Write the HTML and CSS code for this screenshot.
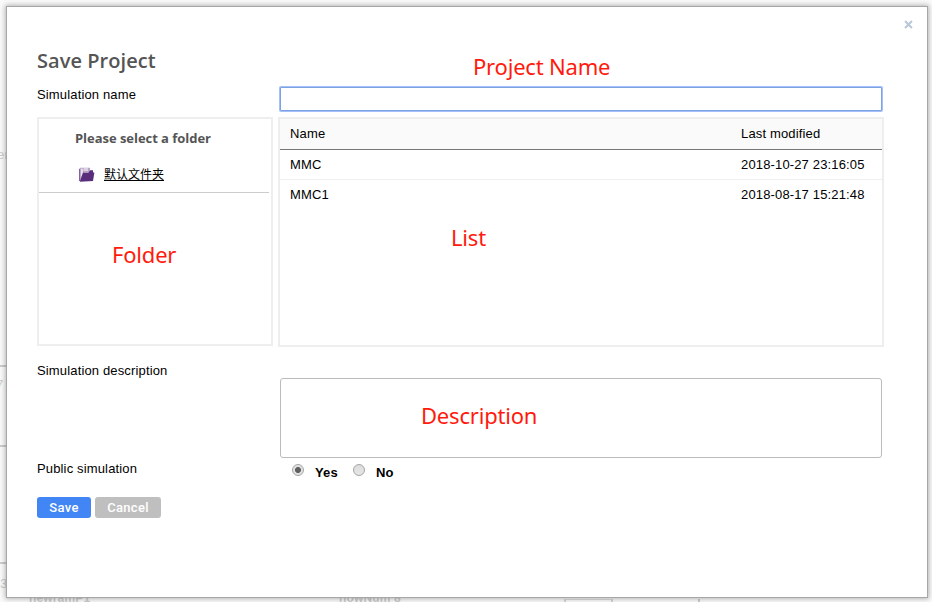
FILE: index.html
```html
<!DOCTYPE html>
<html lang="en">
<head>
<meta charset="utf-8">
<title>Save Project</title>
<link rel="stylesheet" href="styles.css">
</head>
<body>
<div class="backdrop" aria-hidden="true">
  <span class="ghost g-el">er</span>
  <span class="ghost g-seven">7</span>
  <span class="ghost g-three">3</span>
  <i class="rule r1"></i><i class="rule r2"></i><i class="rule r3"></i>
  <span class="ghost g-num1">newramP1</span>
  <span class="ghost g-num2">nowNum 8</span>
  <i class="box"></i><i class="tick"></i>
</div>
<main class="dialog">
  <button class="close" aria-label="Close"><svg width="10" height="10" viewBox="0 0 10 10"><path d="M1.2 1.2 8.8 8.8M8.8 1.2 1.2 8.8"/></svg></button>
  <h1>Save Project</h1>
  <div class="row name-row">
    <label for="name">Simulation name</label>
    <input id="name" class="name-input" type="text">
  </div>
  <div class="row browser">
    <section class="folders">
      <h2>Please select a folder</h2>
      <div class="folder">
        <svg width="16" height="15" viewBox="0 0 16 15"><path fill="#83609f" d="M0 2 1.5 1.2V14H0Z"/><path fill="#b7a3c7" d="M1.3.7H11V5H4.5L2 13H1.3Z"/><path fill="#fff" d="M2.3 1.8H3.6V7L2.3 11ZM4.6 1.6H9v.9H4.6ZM4.6 3.4H9v.7H4.6Z"/><path fill="#5a2d7c" d="M4 5.5H9.5L11.2 3.3 14 3.2V5.4L15.4 5.5 14 14 .8 14.7Z"/></svg>
        <a>默认文件夹</a>
      </div>
    </section>
    <section class="list">
      <div class="item head"><span>Name</span><span>Last modified</span></div>
      <div class="item"><span>MMC</span><span>2018-10-27 23:16:05</span></div>
      <div class="item last"><span>MMC1</span><span>2018-08-17 15:21:48</span></div>
    </section>
  </div>
  <div class="row desc-row">
    <label for="desc">Simulation description</label>
    <textarea id="desc"></textarea>
  </div>
  <div class="row public-row">
    <span>Public simulation</span>
    <div class="choices">
      <i class="radio on"></i><b>Yes</b>
      <i class="radio"></i><b>No</b>
    </div>
  </div>
  <div class="actions"><button class="btn save">Save</button><button class="btn cancel">Cancel</button></div>
</main>
<span class="note n-name">Project Name</span>
<span class="note n-folder">Folder</span>
<span class="note n-list">List</span>
<span class="note n-desc">Description</span>
</body>
</html>
```
FILE: styles.css
```css
* { box-sizing: border-box; }
body {
  margin: 0;
  padding: 6px;
  width: 932px;
  height: 602px;
  overflow: hidden;
  position: relative;
  background: #fafafa;
  font: 13px/16px "Liberation Sans", Arial, "Noto Sans CJK SC", sans-serif;
  letter-spacing: .15px;
  color: #000;
}
.backdrop { position: absolute; inset: 0; overflow: hidden; }
.ghost { position: absolute; color: #ccc; white-space: nowrap; }
.g-el { left: -3px; top: 147px; }
.g-seven { left: -4px; top: 377px; }
.g-three { left: 0; top: 576px; }
.g-num1 { left: 29px; top: 590px; font-weight: bold; font-size: 12px; }
.g-num2 { left: 339px; top: 590px; font-weight: bold; font-size: 12px; }
.rule { position: absolute; left: 0; width: 6px; height: 2px; background: #ccc; }
.r1 { top: 365px; }
.r2 { top: 445px; }
.r3 { top: 562px; }
.box { position: absolute; left: 564px; top: 599px; width: 49px; height: 6px; border: 2px solid #d4d4d4; border-top: 1px solid #ddd; }
.tick { position: absolute; left: 698px; top: 599px; width: 2px; height: 3px; background: #ccc; }

.dialog {
  position: relative;
  width: 922px;
  height: 592px;
  padding: 42px 30px 0;
  background: #fff;
  border: 1px solid #a6a8a8;
  box-shadow: 0 0 5px 1px rgba(0, 0, 0, .28);
}
.close {
  position: absolute;
  top: 13px;
  right: 14px;
  width: 9px;
  height: 9px;
  padding: 0;
  border: 0;
  background: none;
}
.close svg { display: block; width: 9px; height: 9px; fill: none; stroke: #b9c7d8; stroke-width: 2.3; }
h1 { margin: 0; font: 600 20px/24px "Open Sans", sans-serif; letter-spacing: .05px; color: #555; }
.row { display: grid; grid-template-columns: 236px 606px; column-gap: 5px; }
.name-row { margin-top: 14px; height: 24px; }
.name-input {
  width: 602px;
  height: 24px;
  margin-left: 2px;
  border: 1px solid #7da2e4;
  border-radius: 1px;
  box-shadow: 0 0 0 1px #a3c0f8;
  outline: none;
}
.browser { margin-top: 6px; align-items: start; }
.folders { height: 229px; border: 2px solid #eee; padding-right: 2px; }
h2 { margin: 0; padding: 10px 0 0 36px; font: 700 13px/18px "Open Sans", sans-serif; letter-spacing: -.04px; color: #555; }
.folder { display: flex; align-items: center; height: 46px; padding: 8px 0 0 40px; gap: 9px; border-bottom: 1px solid #ccc; }
.folder svg { position: relative; top: 1px; }
.folder a { font: 12px/16px "Noto Sans CJK SC", sans-serif; letter-spacing: 0; text-decoration: underline; }
.list { height: 230px; border: 2px solid #eee; }
.item { display: grid; grid-template-columns: 451px 1fr; height: 30px; padding-left: 10px; align-items: center; border-bottom: 1px solid #eee; }
.item.head { height: 31px; background: #fafafa; border-bottom-color: #777; }
.item.last { border: 0; }
.desc-row { margin-top: 15px; }
.desc-row label, .public-row > span { padding-top: 1px; }
textarea { width: 602px; height: 80px; margin: 16px 0 0 2px; border: 1px solid #bbb; border-radius: 3px; resize: none; outline: none; }
.public-row { margin-top: 2px; height: 20px; }
.choices { display: flex; align-items: flex-start; padding: 4px 0 0 14px; }
.choices b { padding-top: 1px; width: 38px; }
.radio { width: 12px; height: 12px; margin-right: 11px; border: 1px solid #a5a5a5; border-radius: 50%; background: linear-gradient(#dcdcdc, #e6e6e6); }
.radio.on { background: radial-gradient(circle, #606060 2.6px, #e2e2e2 3.4px); }
.actions { display: flex; gap: 4px; margin-top: 17px; }
.btn { height: 21px; padding: 0; border: 0; border-radius: 3px; font: 500 13px/21px Roboto, sans-serif; letter-spacing: .3px; color: #fff; }
.save { width: 54px; background: #4285f4; }
.cancel { width: 66px; background: #bfbfbf; }
.note { position: absolute; font: 22px/30px "Noto Sans", sans-serif; letter-spacing: -.2px; color: #ff1a0d; white-space: nowrap; }
.n-name { left: 473px; top: 51px; }
.n-folder { left: 112px; top: 239px; }
.n-list { left: 451px; top: 222px; }
.n-desc { left: 421px; top: 400px; }
```
